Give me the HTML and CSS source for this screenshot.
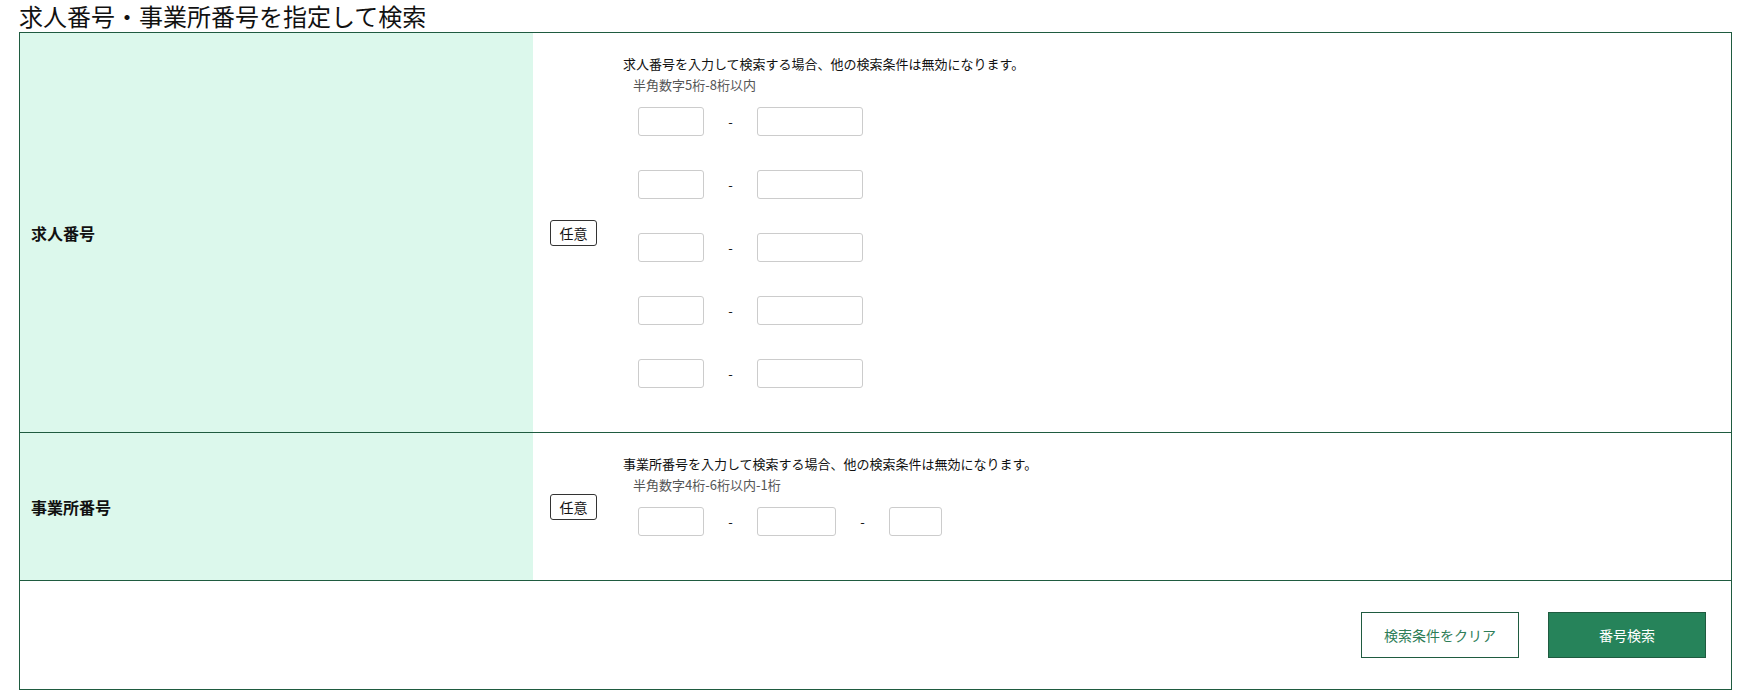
FILE: index.html
```html
<!DOCTYPE html>
<html lang="ja">
<head>
<meta charset="utf-8">
<title>求人番号・事業所番号を指定して検索</title>
<link rel="stylesheet" href="styles.css">
</head>
<body>
<div class="page">
  <h2 class="title">求人番号・事業所番号を指定して検索</h2>
  <div class="form">
    <div class="row row-job">
      <div class="label">求人番号</div>
      <div class="field">
        <span class="badge">任意</span>
        <div class="content">
          <p class="desc">求人番号を入力して検索する場合、他の検索条件は無効になります。</p>
          <p class="hint">半角数字5桁-8桁以内</p>
          <div class="inputs">
            <div class="num-row"><input class="in w66" type="text"><span class="dash">-</span><input class="in w106" type="text"></div>
            <div class="num-row"><input class="in w66" type="text"><span class="dash">-</span><input class="in w106" type="text"></div>
            <div class="num-row"><input class="in w66" type="text"><span class="dash">-</span><input class="in w106" type="text"></div>
            <div class="num-row"><input class="in w66" type="text"><span class="dash">-</span><input class="in w106" type="text"></div>
            <div class="num-row"><input class="in w66" type="text"><span class="dash">-</span><input class="in w106" type="text"></div>
          </div>
        </div>
      </div>
    </div>
    <div class="row row-office">
      <div class="label">事業所番号</div>
      <div class="field">
        <span class="badge">任意</span>
        <div class="content">
          <p class="desc">事業所番号を入力して検索する場合、他の検索条件は無効になります。</p>
          <p class="hint">半角数字4桁-6桁以内-1桁</p>
          <div class="inputs">
            <div class="num-row"><input class="in w66" type="text"><span class="dash">-</span><input class="in w79" type="text"><span class="dash">-</span><input class="in w53" type="text"></div>
          </div>
        </div>
      </div>
    </div>
    <div class="actions">
      <button class="btn btn-clear" type="button">検索条件をクリア</button>
      <button class="btn btn-search" type="button">番号検索</button>
    </div>
  </div>
</div>
</body>
</html>
```

FILE: styles.css
```css
body {
  margin: 0;
  background: #fff;
  color: #111;
  font-family: "Noto Sans CJK JP", "Noto Sans", sans-serif;
}

.page {
  width: 1713px;
  margin-left: 19px;
}

.title {
  margin: 0;
  font-size: 24px;
  font-weight: normal;
  line-height: 32px;
  color: #111;
}

.form {
  border: 1px solid #1f5b40;
}

.row {
  display: grid;
  grid-template-columns: 513px 1fr;
}

.row + .row,
.row + .actions {
  border-top: 1px solid #1f5b40;
}

.label {
  background: #dcf8ec;
  display: flex;
  align-items: center;
  padding-left: 11px;
  font-size: 16px;
  font-weight: bold;
  color: #111;
}

.field {
  display: flex;
  align-items: center;
  padding-left: 17px;
}

.badge {
  box-sizing: border-box;
  width: 47px;
  height: 26px;
  border: 1px solid #333;
  border-radius: 3px;
  display: flex;
  align-items: center;
  justify-content: center;
  font-size: 14px;
  margin-right: 26px;
  flex-shrink: 0;
}

.content {
  padding: 21px 0 44px;
}

.desc {
  margin: 0;
  font-size: 13px;
  line-height: 20px;
  color: #111;
}

.hint {
  margin: 1px 0 0;
  padding-left: 10px;
  font-size: 13px;
  line-height: 20px;
  color: #555;
}

.inputs {
  margin-top: 12px;
  padding-left: 15px;
  display: flex;
  flex-direction: column;
  gap: 34px;
}

.num-row {
  display: flex;
  align-items: center;
}

.in {
  box-sizing: border-box;
  height: 29px;
  margin: 0;
  padding: 0 4px;
  border: 1px solid #ccc;
  border-radius: 3px;
  background: #fff;
  font-family: inherit;
}

.w66 { width: 66px; }
.w106 { width: 106px; }
.w79 { width: 79px; }
.w53 { width: 53px; }

.dash {
  width: 53px;
  text-align: center;
  font-size: 13px;
  color: #111;
}

.actions {
  display: flex;
  justify-content: flex-end;
  gap: 29px;
  padding: 31px 25px 31px;
}

.btn {
  box-sizing: border-box;
  width: 158px;
  height: 46px;
  border: 1px solid #1f5b40;
  font-family: inherit;
  font-size: 14px;
  cursor: pointer;
}

.btn-clear {
  background: #fff;
  color: #2e7d57;
}

.btn-search {
  background: #26835a;
  color: #fff;
}
```
